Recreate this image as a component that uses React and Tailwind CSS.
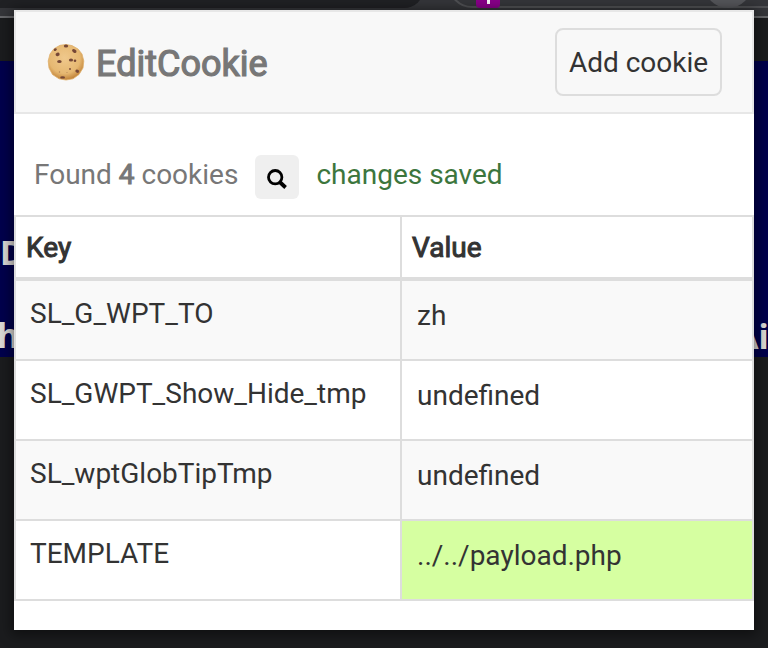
import { useState } from 'react';

const initialCookies = [
  { key: 'SL_G_WPT_TO', value: 'zh', saved: false },
  { key: 'SL_GWPT_Show_Hide_tmp', value: 'undefined', saved: false },
  { key: 'SL_wptGlobTipTmp', value: 'undefined', saved: false },
  { key: 'TEMPLATE', value: '../../payload.php', saved: true }
];

const CookieIcon = () => (
  <svg width="38" height="38" viewBox="0 0 38 38">
    <defs>
      <radialGradient id="dough" cx="46%" cy="38%" r="62%">
        <stop offset="0" stopColor="#efc88c" />
        <stop offset="0.7" stopColor="#e6b872" />
        <stop offset="1" stopColor="#c08238" />
      </radialGradient>
    </defs>
    <path
      d="M19 1.5 L25 2.6 L31 6 L35 11 L36.8 18 L36 25 L32 31.5 L26 35.8 L19 37 L12 35.8 L5.5 31.5 L2 25 L1.2 18 L3 11 L7 5.7 L13 2.3 Z"
      fill="url(#dough)"
      stroke="#dfb06c"
      strokeWidth="0.8"
      strokeLinejoin="round"
    />
    <g fill="#754736">
      <ellipse cx="19" cy="3" rx="2.2" ry="1.5" />
      <ellipse cx="8.3" cy="6.6" rx="1.6" ry="1.2" transform="rotate(-30 8.3 6.6)" />
      <ellipse cx="10.6" cy="11.4" rx="2.1" ry="1.7" transform="rotate(-20 10.6 11.4)" />
      <ellipse cx="27.3" cy="8" rx="2.4" ry="1.6" transform="rotate(30 27.3 8)" />
      <ellipse cx="12.4" cy="18.4" rx="2.3" ry="1.5" />
      <ellipse cx="24" cy="17" rx="2.1" ry="1.6" />
      <ellipse cx="28" cy="17.7" rx="1.3" ry="1.3" />
      <ellipse cx="30.2" cy="28.2" rx="1.9" ry="1.6" transform="rotate(30 30.2 28.2)" />
      <ellipse cx="15.6" cy="34.4" rx="2.4" ry="1.2" />
      <circle cx="23" cy="26" r="0.9" />
      <circle cx="12.5" cy="29" r="0.7" opacity="0.5" />
      <circle cx="20" cy="29.5" r="0.5" opacity="0.5" />
    </g>
  </svg>
);

const SearchIcon = () => (
  <svg width="22" height="22" viewBox="0 0 22 22" fill="none" stroke="#000">
    <circle cx="9.2" cy="9.2" r="6.7" strokeWidth="2.8" />
    <path d="M13.7 14 L19.6 19.5" strokeWidth="3.8" />
  </svg>
);

// Browser window behind the popup
const Backdrop = () => (
  <div className="absolute inset-0 overflow-hidden bg-[#1b1c1e]">
    <div className="relative h-[18px] overflow-hidden border-b-2 border-[#67686b] bg-[#35363a]">
      <div className="absolute -top-8 -left-8 h-10 w-[456px] rounded-full bg-[#202124]" />
      <div className="absolute -top-10 left-[448px] h-12 w-[400px] rounded-full border-2 border-[#505154]" />
      <div className="absolute -top-4 left-[476px] h-6 w-6 rounded bg-[#8b008b]">
        <div className="mx-auto mt-4 h-1 w-[3px] bg-white" />
      </div>
      <div className="absolute -top-10 left-[704px] size-12 rounded-full bg-[#55565a]" />
    </div>
    <div className="mt-[43px] h-[296px] bg-[#00004d]" />
    <div className="absolute top-[232px] left-0 font-['Noto_Sans'] text-[34px] leading-10 font-bold text-[#dedbd7]">D</div>
    <div className="absolute top-[315px] left-[-3px] font-['Noto_Sans'] text-[34px] leading-10 font-bold text-[#dedbd7]">h</div>
    <div className="absolute top-[316px] left-[735px] font-['Noto_Sans'] text-[34px] leading-10 font-bold text-[#dedbd7]">Ai</div>
  </div>
);

const CookieRow = ({ cookie, striped }) => (
  <tr className={`h-20 align-top ${striped ? 'bg-[#f9f9f9]' : 'bg-white'}`}>
    <td className="border-2 border-[#dddddd] px-[14px] pt-[13px]">{cookie.key}</td>
    <td className={`border-2 border-[#dddddd] px-[15px] pt-[15px] ${cookie.saved ? 'bg-[#d6ffa1]' : ''}`}>
      {cookie.value}
    </td>
  </tr>
);

const App = () => {
  const [cookies] = useState(initialCookies);

  return (
    <div className="relative h-[648px] w-[768px] overflow-hidden px-[14px] pt-[10px] font-[Roboto,sans-serif] text-[28px] leading-10 text-[#333333]">
      <Backdrop />

      <div className="relative h-[620px] bg-white shadow-[0_2px_12px_3px_rgba(0,0,0,0.45)]">
        {/* Header */}
        <header className="flex h-[104px] items-center justify-between border-2 border-[#e7e7e7] bg-[#f8f8f8] pr-[30px] pl-[31px]">
          <div className="flex items-center gap-[11px] text-[36px] text-[#777777]">
            <CookieIcon />
            <span className="pt-1 [-webkit-text-stroke:1.2px_#777777]">EditCookie</span>
          </div>
          <button className="h-[68px] w-[167px] rounded-lg border-2 border-[#dddddd] pt-0.5 whitespace-nowrap">
            Add cookie
          </button>
        </header>

        {/* Status line */}
        <div className="flex h-[101px] items-center pt-[21px] pl-5 text-[#777777]">
          <span>
            Found <span className="[-webkit-text-stroke:1px_#777777]">{cookies.length}</span> cookies
          </span>
          <button className="mt-1 ml-[17px] flex size-11 items-center justify-center rounded-md bg-[#efefef] pt-[3px]">
            <SearchIcon />
          </button>
          <span className="ml-[17px] text-[#3c763d]">changes saved</span>
        </div>

        <table className="w-full table-fixed border-collapse">
          <colgroup>
            <col className="w-[386px]" />
            <col />
          </colgroup>
          <thead>
            <tr className="h-[63px] text-left">
              {['Key', 'Value'].map(label => (
                <th
                  key={label}
                  className="border-2 border-b-4 border-[#dddddd] px-[10px] pt-px font-normal [-webkit-text-stroke:1px_#333333]"
                >
                  {label}
                </th>
              ))}
            </tr>
          </thead>
          <tbody className="[&>tr:first-child]:h-[81px]">
            {cookies.map((cookie, i) => (
              <CookieRow key={cookie.key} cookie={cookie} striped={i % 2 === 0} />
            ))}
          </tbody>
        </table>
      </div>
    </div>
  );
};

export default App;
